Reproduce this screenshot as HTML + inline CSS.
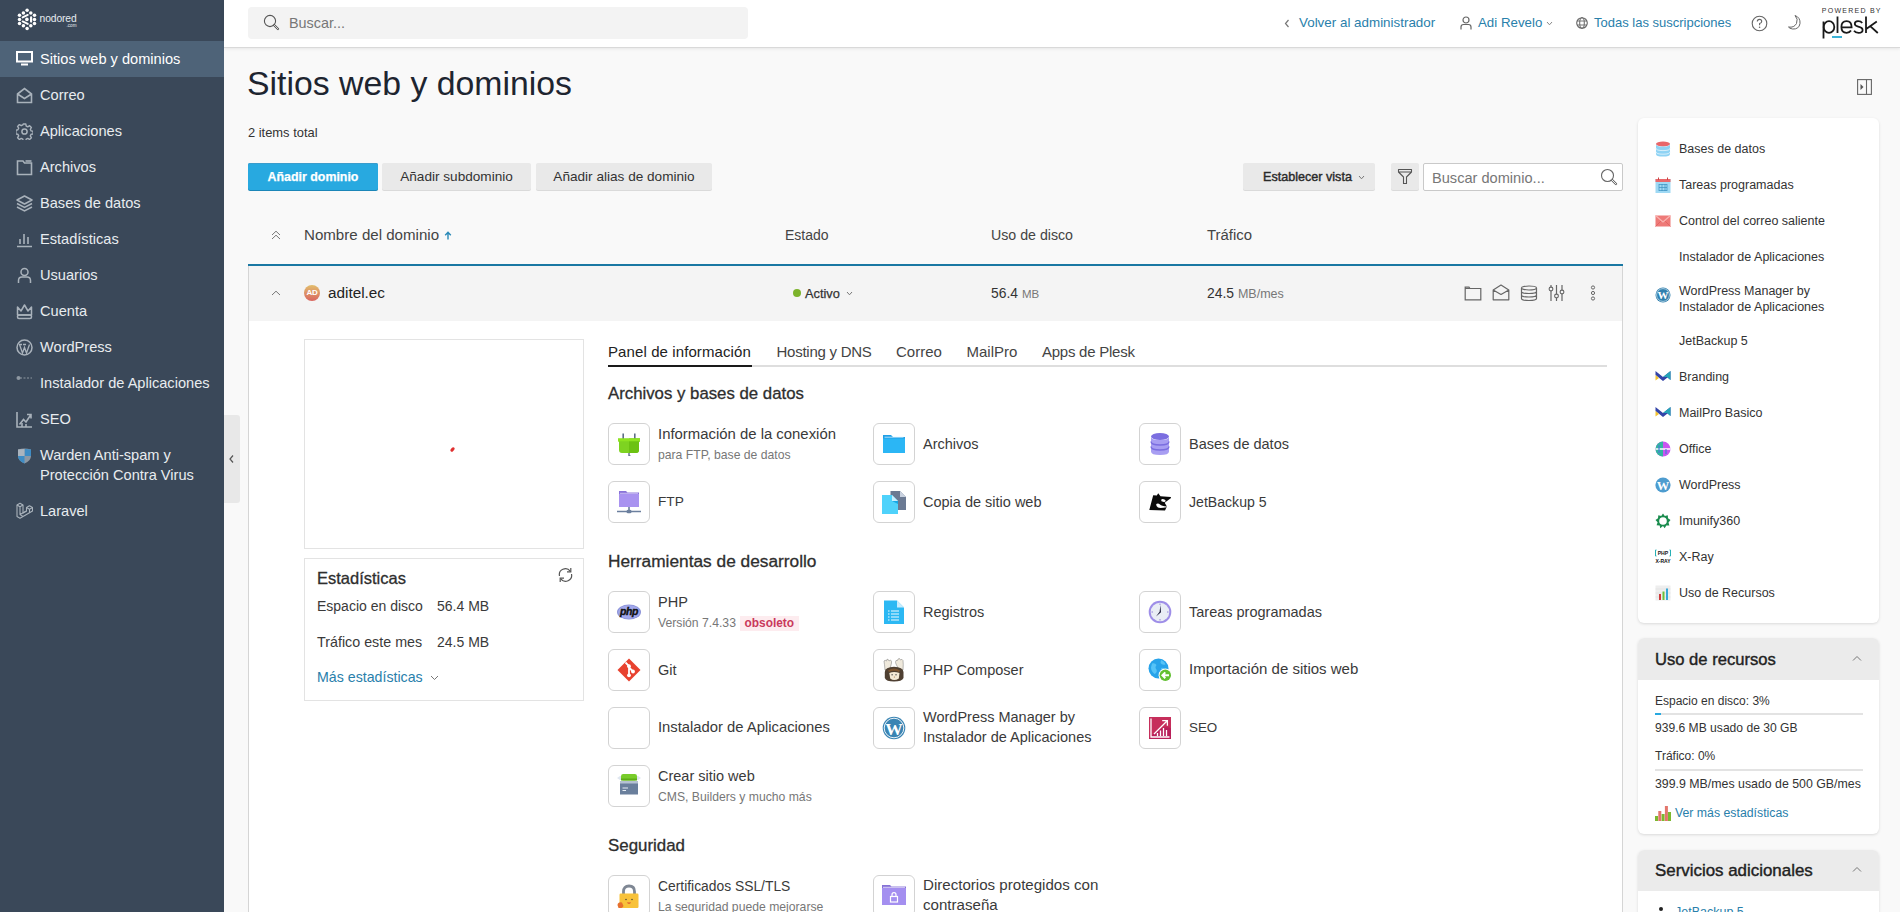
<!DOCTYPE html>
<html><head><meta charset="utf-8">
<style>
*{box-sizing:border-box;margin:0;padding:0}
html,body{width:1900px;height:912px;overflow:hidden;background:#f9f9f9;font-family:"Liberation Sans",sans-serif;color:#222}
.abs{position:absolute}
#side{position:absolute;left:0;top:0;width:224px;height:912px;background:#3a4859}
.nav{position:absolute;left:0;width:224px;height:36px;color:#e8ecef;font-size:14.6px;line-height:36px}
.nav .t{position:absolute;left:40px;top:0;white-space:nowrap}
.nav svg{position:absolute;left:16px;top:10px}
.nav.act{background:#4e6378;color:#fff}
#hdr{position:absolute;left:224px;top:0;width:1676px;height:48px;background:#fff;border-bottom:1px solid #d9d9d9;box-shadow:0 1px 3px rgba(0,0,0,.08)}
.lnk{color:#2980ab}
.btn{position:absolute;top:163px;height:27px;background:#e9e9e9;border-radius:2px;box-shadow:0 1px 0 rgba(0,0,0,.12);font-size:13.6px;line-height:27px;text-align:center;color:#333;white-space:nowrap}
.ibox{position:absolute;width:42px;height:42px;border:1px solid #d3d3d3;border-radius:6px;background:#fff}
.th{position:absolute;top:226px;font-size:15.2px;color:#444;white-space:nowrap;line-height:18px}
</style></head><body>

<div id="side">
  <!-- logo -->
  <svg class="abs" style="left:0;top:0" width="90" height="40" viewBox="0 0 90 40">
    <g fill="#fff"><circle cx="27.1" cy="10.3" r="1.75"/><circle cx="23.4" cy="12.9" r="1.75"/><circle cx="30.8" cy="12.9" r="1.75"/><circle cx="19.5" cy="15.3" r="1.75"/><circle cx="34.5" cy="15.3" r="1.75"/><circle cx="19.5" cy="19.4" r="1.75"/><circle cx="34.5" cy="19.4" r="1.75"/><circle cx="19.5" cy="23.6" r="1.75"/><circle cx="34.5" cy="23.6" r="1.75"/><circle cx="23.4" cy="25.8" r="1.75"/><circle cx="30.8" cy="25.8" r="1.75"/><circle cx="27.1" cy="28.4" r="1.75"/><circle cx="26.9" cy="19.4" r="1.8"/><rect x="30" y="16.3" width="2.2" height="6.4" rx="1.1"/></g>
    <path d="M22.6 17.4 L27.8 14.9 M22.6 21.4 L27.8 23.9" fill="none" stroke="#fff" stroke-width="1.9" stroke-linecap="round"/>
    <text x="39.5" y="22.4" fill="#e6ebf0" font-family="Liberation Sans" font-size="10.3" letter-spacing="-0.1">nodored</text>
    <text x="66.5" y="26.9" fill="#e6ebf0" font-family="Liberation Sans" font-size="4.6">.com</text>
  </svg>
  <div class="nav act" style="top:41px"><svg width="17" height="15" viewBox="0 0 17 15"><rect x="1" y="1" width="15" height="9.5" fill="none" stroke="#fff" stroke-width="2"/><rect x="5" y="12.5" width="7" height="2" fill="#fff"/></svg><span class="t">Sitios web y dominios</span></div>
  <div class="nav" style="top:77px"><svg width="17" height="17" viewBox="0 0 17 17"><path d="M1.5 7 L8.5 1.5 L15.5 7 V15.5 H1.5 Z M1.5 7 L8.5 11.5 L15.5 7" fill="none" stroke="#a9b2bb" stroke-width="1.6"/></svg><span class="t">Correo</span></div>
  <div class="nav" style="top:113px"><svg width="17" height="17" viewBox="0 0 17 17"><circle cx="8.5" cy="8.5" r="2.6" fill="none" stroke="#a9b2bb" stroke-width="1.5"/><path d="M7.2 1h2.6l.4 2 1.6.8 1.8-1.1 1.8 1.8-1.1 1.8.8 1.6 2 .4v2.6l-2 .4-.8 1.6 1.1 1.8-1.8 1.8-1.8-1.1-1.6.8-.4 2H7.2l-.4-2-1.6-.8-1.8 1.1-1.8-1.8 1.1-1.8-.8-1.6-2-.4V7.2l2-.4.8-1.6-1.1-1.8 1.8-1.8 1.8 1.1 1.6-.8z" fill="none" stroke="#a9b2bb" stroke-width="1.4" stroke-linejoin="round"/></svg><span class="t">Aplicaciones</span></div>
  <div class="nav" style="top:149px"><svg width="17" height="17" viewBox="0 0 17 17"><path d="M1.5 2 H7 L8.5 4 H15.5 V15.5 H1.5 Z" fill="none" stroke="#a9b2bb" stroke-width="1.6"/><path d="M9.5 2 H15.5" stroke="#a9b2bb" stroke-width="1.6"/></svg><span class="t">Archivos</span></div>
  <div class="nav" style="top:185px"><svg width="17" height="17" viewBox="0 0 17 17"><path d="M8.5 1 L16 5 L8.5 9 L1 5 Z" fill="none" stroke="#a9b2bb" stroke-width="1.5" stroke-linejoin="round"/><path d="M1 8.5 L8.5 12.5 L16 8.5 M1 12 L8.5 16 L16 12" fill="none" stroke="#a9b2bb" stroke-width="1.5"/></svg><span class="t">Bases de datos</span></div>
  <div class="nav" style="top:221px"><svg width="17" height="17" viewBox="0 0 17 17"><path d="M1 15.5 H16 M4 13 V8 M8 13 V3 M12 13 V6" fill="none" stroke="#a9b2bb" stroke-width="1.6"/></svg><span class="t">Estadísticas</span></div>
  <div class="nav" style="top:257px"><svg width="17" height="17" viewBox="0 0 17 17"><circle cx="8.5" cy="5" r="3.5" fill="none" stroke="#a9b2bb" stroke-width="1.5"/><path d="M2.5 16 V13.5 Q2.5 10 6 10 H11 Q14.5 10 14.5 13.5 V16" fill="none" stroke="#a9b2bb" stroke-width="1.5"/></svg><span class="t">Usuarios</span></div>
  <div class="nav" style="top:293px"><svg width="17" height="17" viewBox="0 0 17 17"><path d="M1.5 4 L5 8 L8.5 2 L12 8 L15.5 4 V12 H1.5 Z" fill="none" stroke="#a9b2bb" stroke-width="1.5" stroke-linejoin="round"/><rect x="1.5" y="12" width="14" height="3.5" rx="1.5" fill="none" stroke="#a9b2bb" stroke-width="1.5"/></svg><span class="t">Cuenta</span></div>
  <div class="nav" style="top:329px"><svg width="17" height="17" viewBox="0 0 17 17"><circle cx="8.5" cy="8.5" r="7.5" fill="none" stroke="#a9b2bb" stroke-width="1.5"/><path d="M3.5 5.5 L6.5 14 L8.5 8.5 L10.5 14 L13.5 5.5 M3 5.5 H6 M7 5.5 H10" fill="none" stroke="#a9b2bb" stroke-width="1.3"/></svg><span class="t">WordPress</span></div>
  <div class="nav" style="top:365px"><svg width="17" height="17" viewBox="0 0 17 17"><circle cx="2.5" cy="3" r="2" fill="#8e98a2"/><path d="M4 3 H16" stroke="#8e98a2" stroke-width="1" stroke-dasharray="2 1.5"/></svg><span class="t">Instalador de Aplicaciones</span></div>
  <div class="nav" style="top:401px"><svg width="17" height="17" viewBox="0 0 17 17"><path d="M1 1 V16 H16" fill="none" stroke="#a9b2bb" stroke-width="1.6"/><path d="M3.5 13.5 L7.5 8.5 L10 11 L15 3.5 M11 3.5 H15 V7.5" fill="none" stroke="#a9b2bb" stroke-width="1.6"/><path d="M6 16 V12 M10 16 V13" stroke="#a9b2bb" stroke-width="1.6"/></svg><span class="t">SEO</span></div>
  <div class="nav" style="top:437px;height:56px;line-height:20px"><svg style="top:11px;left:17px" width="15" height="16" viewBox="0 0 15 16"><path d="M1 1.5 Q7.5 -0.5 14 1.5 V8 Q14 13 7.5 15.5 Q1 13 1 8 Z" fill="#8d98a4"/><path d="M7.5 0.9 Q11 0.9 14 1.5 V8 H7.5 Z" fill="#3e8cc4"/><path d="M1 8 H7.5 V15.5 Q1 13 1 8 Z" fill="#3e8cc4"/><path d="M1 1.5 Q4 0.9 7.5 0.9 V8 H1 Z" fill="#aab4be"/></svg><span class="t" style="top:8px">Warden Anti-spam y<br>Protección Contra Virus</span></div>
  <div class="nav" style="top:493px"><svg style="top:9px;left:16px" width="17" height="18" viewBox="0 0 17 18"><g fill="none" stroke="#a9b2bb" stroke-width="1.1" stroke-linejoin="round"><path d="M1 3 L4 1.3 L7 3 V11 L10.5 9 V5.5 L13.5 3.8 L16.5 5.5 V9 L7 14.5 L4 16.2 L1 14.5 Z"/><path d="M1 3 L4 4.7 L7 3 M4 4.7 V12.6 L7 14.5 M4 12.6 L10.5 9 M10.5 5.5 L13.5 7.2 L16.5 5.5 M13.5 7.2 V10.7"/></g></svg><span class="t">Laravel</span></div>
</div>

<div id="hdr"></div>
<!-- header contents -->
<div class="abs" style="left:248px;top:7px;width:500px;height:32px;background:#f3f3f3;border-radius:4px"></div>
<svg class="abs" style="left:263px;top:14px" width="17" height="17" viewBox="0 0 17 17"><circle cx="7" cy="7" r="5.6" fill="none" stroke="#555" stroke-width="1.1"/><path d="M11 11 L15 15" stroke="#555" stroke-width="2.3" stroke-linecap="round"/><path d="M11 11 L15 15" stroke="#f3f3f3" stroke-width="0.8" stroke-linecap="round"/></svg>
<div class="abs" style="left:289px;top:14px;font-size:14.4px;line-height:18px;color:#777">Buscar...</div>

<svg class="abs" style="left:1284px;top:19px" width="6" height="9" viewBox="0 0 6 9"><path d="M4.5 1 L1.5 4.5 L4.5 8" fill="none" stroke="#777" stroke-width="1.2"/></svg>
<div class="abs lnk" style="left:1299px;top:15px;font-size:13.4px;line-height:16px;white-space:nowrap">Volver al administrador</div>
<svg class="abs" style="left:1460px;top:16px" width="12" height="14" viewBox="0 0 12 14"><circle cx="6" cy="4" r="3" fill="none" stroke="#666" stroke-width="1.2"/><path d="M1 13.5 V11 Q1 8.5 3.5 8.5 H8.5 Q11 8.5 11 11 V13.5" fill="none" stroke="#666" stroke-width="1.2"/></svg>
<div class="abs lnk" style="left:1478px;top:15px;font-size:13.3px;line-height:16px;white-space:nowrap">Adi Revelo</div>
<svg class="abs" style="left:1546px;top:21px" width="7" height="5" viewBox="0 0 7 5"><path d="M1 1 L3.5 3.8 L6 1" fill="none" stroke="#888" stroke-width="1"/></svg>
<svg class="abs" style="left:1576px;top:17px" width="12" height="12" viewBox="0 0 12 12"><circle cx="6" cy="6" r="5.3" fill="none" stroke="#666" stroke-width="1.1"/><ellipse cx="6" cy="6" rx="2.3" ry="5.3" fill="none" stroke="#666" stroke-width="1"/><path d="M1 4 H11 M1 8 H11" stroke="#666" stroke-width="0.9"/></svg>
<div class="abs lnk" style="left:1594px;top:15px;font-size:13px;line-height:16px;white-space:nowrap">Todas las suscripciones</div>
<svg class="abs" style="left:1751px;top:15px" width="17" height="17" viewBox="0 0 17 17"><circle cx="8.5" cy="8.5" r="7.3" fill="none" stroke="#666" stroke-width="1.1"/><path d="M6.3 6.6 Q6.3 4.4 8.5 4.4 Q10.7 4.4 10.7 6.4 Q10.7 7.8 8.6 8.6 V10.2" fill="none" stroke="#666" stroke-width="1.1"/><circle cx="8.6" cy="12.3" r="0.8" fill="#666"/></svg>
<svg class="abs" style="left:1786px;top:14px" width="17" height="17" viewBox="0 0 17 17"><path d="M9 1.5 Q14.5 3.5 14 9.5 Q13 15.5 6.5 15 Q3.5 14.5 2.5 13 Q8 14 10.5 9.5 Q12.5 5 9 1.5 Z" fill="none" stroke="#666" stroke-width="1"/></svg>
<svg class="abs" style="left:1818px;top:5px" width="64" height="36" viewBox="0 0 64 36">
  <text x="3.8" y="8" font-family="Liberation Sans" font-size="7" letter-spacing="1.25" fill="#333">POWERED BY</text>
  <g fill="none" stroke="#1a1a1a" stroke-width="1.8">
    <path d="M5.5 16.5 V33.5"/>
    <ellipse cx="11" cy="22" rx="5.3" ry="5.8"/>
    <path d="M19.5 11.5 V28"/>
    <path d="M23.5 22.3 H33.6 Q33.6 16.2 28.6 16.2 Q23.4 16.2 23.4 22 Q23.4 27.8 28.6 27.8 Q31.6 27.8 33 25.6"/>
    <path d="M44.2 18 Q43 16.2 40 16.2 Q36.8 16.2 36.8 18.8 Q36.8 20.8 40.2 21.6 Q44.6 22.6 44.6 24.9 Q44.6 27.8 40.6 27.8 Q37.4 27.8 36 25.8"/>
    <path d="M48 11.5 V28 M58.8 16.5 L48.2 24 M52.2 21.2 L59.8 28"/>
  </g>
  <rect x="14" y="31" width="10" height="2" fill="#3bb2d6"/>
</svg>
<!-- sidebar collapse handle -->
<div class="abs" style="left:224px;top:415px;width:16px;height:88px;background:#e8e8e8;border-radius:0 3px 3px 0"></div>
<svg class="abs" style="left:228px;top:454px" width="7" height="10" viewBox="0 0 7 10"><path d="M5 1.5 L2 5 L5 8.5" fill="none" stroke="#555" stroke-width="1.2"/></svg>

<!-- page title -->
<div class="abs" style="left:247px;top:62.5px;font-size:33.8px;line-height:40px;color:#1e2530;white-space:nowrap">Sitios web y dominios</div>
<svg class="abs" style="left:1857px;top:79px" width="15" height="16" viewBox="0 0 15 16"><rect x="0.6" y="0.6" width="13.8" height="14.8" fill="none" stroke="#666" stroke-width="1.1"/><path d="M9.5 0.6 V15.4" stroke="#666" stroke-width="1.1"/><path d="M3.5 5 L6.5 8 L3.5 11 Z" fill="#555"/></svg>
<div class="abs" style="left:248px;top:125px;font-size:12.9px;line-height:15px;color:#333;white-space:nowrap">2 items total</div>

<!-- toolbar -->
<div class="btn" style="left:248px;width:130px;padding-top:1px;background:#28a9e0;color:#fff;font-weight:bold;font-size:12.4px;-webkit-text-stroke:0.25px #fff;box-shadow:0 1px 0 #1b86b8,inset 0 1px 0 #3a9ccc">Añadir dominio</div>
<div class="btn" style="left:382px;width:149px">Añadir subdominio</div>
<div class="btn" style="left:536px;width:176px">Añadir alias de dominio</div>
<div class="btn" style="left:1243px;width:132px;text-align:left;padding-left:20px;padding-top:1px;font-size:12.6px;-webkit-text-stroke:0.4px #2a2a2a;color:#2a2a2a">Establecer vista</div>
<svg class="abs" style="left:1358px;top:175px" width="7" height="5" viewBox="0 0 7 5"><path d="M1 1 L3.5 3.8 L6 1" fill="none" stroke="#777" stroke-width="1"/></svg>
<div class="btn" style="left:1391px;width:28px"></div>
<svg class="abs" style="left:1397px;top:168px" width="16" height="17" viewBox="0 0 16 17"><path d="M1.5 1.5 H14.5 V4 L9.5 9 V15.5 H6.5 V9 L1.5 4 Z M1.5 4 H14.5" fill="none" stroke="#555" stroke-width="1.1" stroke-linejoin="round"/></svg>
<div class="abs" style="left:1423px;top:163px;width:200px;height:28px;background:#fff;border:1px solid #c9c9c9;border-radius:2px"></div>
<div class="abs" style="left:1432px;top:170px;font-size:14.6px;line-height:17px;color:#777;white-space:nowrap">Buscar dominio...</div>
<svg class="abs" style="left:1600px;top:168px" width="18" height="18" viewBox="0 0 18 18"><circle cx="7.5" cy="7.5" r="6" fill="none" stroke="#666" stroke-width="1.1"/><path d="M12 12 L16 16" stroke="#666" stroke-width="2.4" stroke-linecap="round"/><path d="M12 12 L16 16" stroke="#fff" stroke-width="0.9" stroke-linecap="round"/></svg>

<!-- table header -->
<svg class="abs" style="left:271px;top:230px" width="10" height="10" viewBox="0 0 10 10"><path d="M1 5 L5 1.2 L9 5 M1 9 L5 5.2 L9 9" fill="none" stroke="#777" stroke-width="1"/></svg>
<div class="th" style="left:304px;font-size:15.1px">Nombre del dominio</div>
<svg class="abs" style="left:444px;top:231px" width="8" height="9" viewBox="0 0 8 9"><path d="M4 8.5 V1.5 M1.2 4.2 L4 1.2 L6.8 4.2" fill="none" stroke="#2a8ab8" stroke-width="1.4"/></svg>
<div class="th" style="left:785px;font-size:14px">Estado</div>
<div class="th" style="left:991px;font-size:14.2px">Uso de disco</div>
<div class="th" style="left:1207px;font-size:14.9px">Tráfico</div>
<div class="abs" style="left:248px;top:264px;width:1375px;height:2px;background:#1a78a3"></div>

<!-- domain row -->
<div class="abs" style="left:248px;top:266px;width:1375px;height:646px;border-left:1px solid #d5d5d5;border-right:1px solid #d5d5d5;background:#fff"></div>
<div class="abs" style="left:249px;top:266px;width:1373px;height:55px;background:#f4f4f4"></div>
<svg class="abs" style="left:271px;top:290px" width="10" height="6" viewBox="0 0 10 6"><path d="M1 5 L5 1.2 L9 5" fill="none" stroke="#777" stroke-width="1"/></svg>
<div class="abs" style="left:304px;top:285px;width:16px;height:16px;border-radius:50%;background:linear-gradient(#e2be6c,#d9655f);color:#fff;font-weight:bold;font-size:8px;line-height:16px;text-align:center;letter-spacing:-0.3px">AD</div>
<div class="abs" style="left:328px;top:284px;font-size:15.3px;line-height:17px;color:#222;white-space:nowrap">aditel.ec</div>
<div class="abs" style="left:793px;top:289px;width:8px;height:8px;border-radius:50%;background:#7cb32b"></div>
<div class="abs" style="left:805px;top:286px;font-size:12.8px;line-height:15px;-webkit-text-stroke:0.25px #333;color:#333">Activo</div>
<svg class="abs" style="left:846px;top:291px" width="7" height="5" viewBox="0 0 7 5"><path d="M1 1 L3.5 3.8 L6 1" fill="none" stroke="#777" stroke-width="1"/></svg>
<div class="abs" style="left:991px;top:285px;font-size:13.9px;line-height:16px;color:#333;white-space:nowrap">56.4 <span style="font-size:11.5px;color:#777">MB</span></div>
<div class="abs" style="left:1207px;top:285px;font-size:13.9px;line-height:16px;color:#333;white-space:nowrap">24.5 <span style="font-size:12.5px;color:#777">MB/mes</span></div>
<svg class="abs" style="left:1464px;top:286px" width="18" height="15" viewBox="0 0 18 15"><path d="M1.2 13.8 V1.2 H5 L6 2.5 H16.8 V13.8 Z M1.2 2.5 H6" fill="none" stroke="#666" stroke-width="1.2"/></svg>
<svg class="abs" style="left:1492px;top:284px" width="18" height="17" viewBox="0 0 18 17"><path d="M1.2 6 L9 1 L16.8 6 V15.8 H1.2 Z M1.2 6 L9 10.5 L16.8 6" fill="none" stroke="#666" stroke-width="1.2" stroke-linejoin="round"/></svg>
<svg class="abs" style="left:1520px;top:285px" width="18" height="17" viewBox="0 0 18 17"><ellipse cx="9" cy="3" rx="7.5" ry="2" fill="none" stroke="#666" stroke-width="1.2"/><path d="M1.5 3 V13.5 Q1.5 15.5 9 15.5 Q16.5 15.5 16.5 13.5 V3 M1.5 6.5 Q1.5 8.5 9 8.5 Q16.5 8.5 16.5 6.5 M1.5 10 Q1.5 12 9 12 Q16.5 12 16.5 10" fill="none" stroke="#666" stroke-width="1.2"/></svg>
<svg class="abs" style="left:1548px;top:284px" width="17" height="18" viewBox="0 0 17 18"><path d="M3 1 V17 M8.5 1 V17 M14 1 V17" stroke="#666" stroke-width="1.2"/><circle cx="3" cy="5" r="1.9" fill="#f4f4f4" stroke="#666" stroke-width="1.1"/><circle cx="8.5" cy="12" r="1.9" fill="#f4f4f4" stroke="#666" stroke-width="1.1"/><circle cx="14" cy="8" r="1.9" fill="#f4f4f4" stroke="#666" stroke-width="1.1"/></svg>
<svg class="abs" style="left:1590px;top:285px" width="6" height="16" viewBox="0 0 6 16"><circle cx="3" cy="2.5" r="1.6" fill="none" stroke="#666" stroke-width="1"/><circle cx="3" cy="8" r="1.6" fill="none" stroke="#666" stroke-width="1"/><circle cx="3" cy="13.5" r="1.6" fill="none" stroke="#666" stroke-width="1"/></svg>

<div class="abs" style="left:304px;top:339px;width:280px;height:210px;border:1px solid #e3e3e3;background:#fff"></div>
<div class="abs" style="left:450px;top:448px;width:5px;height:3px;background:#e03030;border-radius:2px;transform:rotate(-50deg)"></div>
<div class="abs" style="left:304px;top:558px;width:280px;height:143px;border:1px solid #e3e3e3;background:#fff"></div>
<div class="abs" style="left:317px;top:568px;font-size:16.5px;line-height:20px;color:#2e2e2e;white-space:nowrap;-webkit-text-stroke:0.3px #2e2e2e">Estadísticas</div>
<svg class="abs" style="left:557px;top:567px" width="17" height="16" viewBox="0 0 17 16"><path d="M2.5 9 A6 6 0 0 1 13.2 4.2 M14.5 7 A6 6 0 0 1 3.8 11.8" fill="none" stroke="#555" stroke-width="1.2"/><path d="M13.8 1 V4.8 H10" fill="none" stroke="#555" stroke-width="1.2"/><path d="M3.2 15 V11.2 H7" fill="none" stroke="#555" stroke-width="1.2"/></svg>
<div class="abs" style="left:317px;top:598px;font-size:14px;line-height:17px;color:#3a3a3a;white-space:nowrap;">Espacio en disco</div>
<div class="abs" style="left:437px;top:598px;font-size:14px;line-height:17px;color:#3a3a3a;white-space:nowrap;">56.4 MB</div>
<div class="abs" style="left:317px;top:634px;font-size:14.3px;line-height:17px;color:#3a3a3a;white-space:nowrap;">Tráfico este mes</div>
<div class="abs" style="left:437px;top:634px;font-size:14px;line-height:17px;color:#3a3a3a;white-space:nowrap;">24.5 MB</div>
<div class="abs" style="left:317px;top:669px;font-size:14.2px;line-height:17px;color:#2980ab;white-space:nowrap;">Más estadísticas</div>
<svg class="abs" style="left:430px;top:675px" width="9" height="6" viewBox="0 0 9 6"><path d="M1 1 L4.5 4.5 L8 1" fill="none" stroke="#777" stroke-width="1"/></svg>
<div class="abs" style="left:608px;top:365px;width:999px;height:2px;background:#dedede"></div>
<div class="abs" style="left:608px;top:365px;width:144px;height:2px;background:#1a1a1a"></div>
<div class="abs" style="left:608px;top:343px;font-size:15px;line-height:18px;color:#222;white-space:nowrap;letter-spacing:0.1px">Panel de información</div>
<div class="abs" style="left:776.5px;top:343px;font-size:15px;line-height:18px;color:#444;white-space:nowrap;letter-spacing:-0.25px">Hosting y DNS</div>
<div class="abs" style="left:896px;top:343px;font-size:15px;line-height:18px;color:#444;white-space:nowrap;">Correo</div>
<div class="abs" style="left:966.5px;top:343px;font-size:15px;line-height:18px;color:#444;white-space:nowrap;">MailPro</div>
<div class="abs" style="left:1042px;top:343px;font-size:15px;line-height:18px;color:#444;white-space:nowrap;letter-spacing:-0.25px">Apps de Plesk</div>
<div class="abs" style="left:608px;top:384px;font-size:16.8px;line-height:20px;color:#2e2e2e;white-space:nowrap;-webkit-text-stroke:0.3px #2e2e2e">Archivos y bases de datos</div>
<div class="ibox" style="left:608px;top:423px"></div>
<svg class="abs" style="left:617px;top:432px" width="24" height="24" viewBox="0 0 24 24"><path d="M6.2 1.5 V7 M17.8 1.5 V7" stroke="#5f6e86" stroke-width="1.6"/><path d="M1 6.5 H23 V9.5 H22 V18 Q22 21 19 21 H5 Q2 21 2 18 V9.5 H1 Z" fill="#7ed321"/><path d="M12 6.5 H23 V9.5 H22 V18 Q22 21 19 21 H12 Z" fill="#6cc212"/><path d="M1 6.5 H23 V9.3 H1 Z" fill="#8ee41f"/><path d="M12 21 V24 H13.5" fill="none" stroke="#5f6e86" stroke-width="1.4"/></svg>
<div class="abs" style="left:658px;top:425px;font-size:14.9px;line-height:18px;color:#3a3a3a;white-space:nowrap;">Información de la conexión</div>
<div class="abs" style="left:658px;top:448px;font-size:12.2px;line-height:15px;color:#777;white-space:nowrap;">para FTP, base de datos</div>
<div class="ibox" style="left:873px;top:423px"></div>
<svg class="abs" style="left:882px;top:432px" width="24" height="24" viewBox="0 0 24 24"><path d="M1 3 H9 L11 5 H23 V21 H1 Z" fill="#1f9fe6"/><path d="M1 6.5 H23 V21 H1 Z" fill="#2bb6f5"/><path d="M2.5 5.2 H21.5" stroke="#d8f1ff" stroke-width="0.8"/></svg>
<div class="abs" style="left:923px;top:436px;font-size:14.5px;line-height:17px;color:#3a3a3a;white-space:nowrap;">Archivos</div>
<div class="ibox" style="left:1139px;top:423px"></div>
<svg class="abs" style="left:1148px;top:432px" width="24" height="24" viewBox="0 0 24 24"><ellipse cx="12" cy="4.5" rx="9" ry="3.5" fill="#7b6ee0"/><path d="M3 4.5 V19.5 Q3 23 12 23 Q21 23 21 19.5 V4.5 Q21 8 12 8 Q3 8 3 4.5 Z" fill="#a89ef2"/><path d="M3 9.5 Q3 13 12 13 Q21 13 21 9.5 M3 14.5 Q3 18 12 18 Q21 18 21 14.5" fill="none" stroke="#7b6ee0" stroke-width="1.4"/></svg>
<div class="abs" style="left:1189px;top:436px;font-size:14.5px;line-height:17px;color:#3a3a3a;white-space:nowrap;">Bases de datos</div>
<div class="ibox" style="left:608px;top:481px"></div>
<svg class="abs" style="left:617px;top:490px" width="24" height="24" viewBox="0 0 24 24"><path d="M2 1 H9 L10.5 2.5 H22 V17 H2 Z" fill="#8a73d8"/><path d="M2 4 H22 V17 H2 Z" fill="#a993f0"/><path d="M3 3.3 H21" stroke="#e6ddff" stroke-width="0.7"/><path d="M12 17 V21.5 M0 21.5 H24" stroke="#6b7f9e" stroke-width="1.6"/><rect x="9.5" y="19.8" width="5" height="3.4" rx="1.5" fill="#6b7f9e"/></svg>
<div class="abs" style="left:658px;top:494px;font-size:13.7px;line-height:16px;color:#3a3a3a;white-space:nowrap;">FTP</div>
<div class="ibox" style="left:873px;top:481px"></div>
<svg class="abs" style="left:882px;top:490px" width="24" height="24" viewBox="0 0 24 24"><path d="M8.5 1 H18 L24 7 V20 H8.5 Z" fill="#6b7a93"/><path d="M18 1 L24 7 H18 Z" fill="#c9d2e0"/><path d="M0 5 H10 L16 11 V25 H0 Z" fill="#4fd2fb"/><path d="M10 5 L16 11 H10 Z" fill="#c8efff"/><path d="M10 11 H16 V14 Z" fill="#17a8e6"/></svg>
<div class="abs" style="left:923px;top:494px;font-size:14.5px;line-height:17px;color:#3a3a3a;white-space:nowrap;">Copia de sitio web</div>
<div class="ibox" style="left:1139px;top:481px"></div>
<svg class="abs" style="left:1148px;top:490px" width="24" height="24" viewBox="0 0 24 24"><path d="M1.3 20 L5.2 5.2 L8.8 5.6 L10.2 3.2 L12.5 6.3 L22.7 6.9 Q23.6 8 22 8.8 L16.7 12.8 L18.9 16.6 L17 20.4 Z" fill="#0a0a0a"/><ellipse cx="15.4" cy="10.5" rx="2.3" ry="1.4" transform="rotate(15 15.4 10.5)" fill="#fff"/><path d="M8.2 14.1 Q10 12.6 12 14.4 Q13.5 16 18.9 16.4 L18.6 17.3 Q12 18.6 10 17.6 Q8 16.6 8.2 14.1 Z" fill="#fff"/></svg>
<div class="abs" style="left:1189px;top:494px;font-size:14.1px;line-height:17px;color:#3a3a3a;white-space:nowrap;">JetBackup 5</div>
<div class="abs" style="left:608px;top:551px;font-size:17.3px;line-height:21px;color:#2e2e2e;white-space:nowrap;-webkit-text-stroke:0.3px #2e2e2e">Herramientas de desarrollo</div>
<div class="ibox" style="left:608px;top:591px"></div>
<svg class="abs" style="left:617px;top:600px" width="24" height="24" viewBox="0 0 24 24"><ellipse cx="12" cy="12" rx="12" ry="7.6" fill="#8c93d8"/><ellipse cx="12" cy="12" rx="11" ry="6.7" fill="#a2a8ec"/><text x="12" y="15.2" text-anchor="middle" font-family="Liberation Sans" font-weight="bold" font-style="italic" font-size="10.5" letter-spacing="-0.4" stroke="#111" stroke-width="0.35" fill="#111">php</text></svg>
<div class="abs" style="left:658px;top:594px;font-size:14.5px;line-height:17px;color:#3a3a3a;white-space:nowrap;">PHP</div>
<div class="abs" style="left:658px;top:616px;font-size:12.2px;line-height:15px;color:#777;white-space:nowrap;">Versión 7.4.33</div>
<div class="abs" style="left:740px;top:616px;width:59px;height:15px;background:#fdecef"></div>
<div class="abs" style="left:744.5px;top:616px;font-size:11.9px;line-height:14px;color:#c93a5c;white-space:nowrap;font-weight:bold">obsoleto</div>
<div class="ibox" style="left:873px;top:591px"></div>
<svg class="abs" style="left:882px;top:600px" width="24" height="24" viewBox="0 0 24 24"><path d="M2 0.5 H15 L22 7.5 V24 H2 Z" fill="#2cb8f3"/><path d="M15 0.5 L22 7.5 H15 Z" fill="#c9ecfd"/><path d="M9 11 H17 M9 14 H17 M9 17 H17 M9 20 H17" stroke="#f0faff" stroke-width="1.1"/><path d="M6 11 H7.5 M6 14 H7.5 M6 17 H7.5 M6 20 H7.5" stroke="#f0faff" stroke-width="1.1"/></svg>
<div class="abs" style="left:923px;top:604px;font-size:14.5px;line-height:17px;color:#3a3a3a;white-space:nowrap;">Registros</div>
<div class="ibox" style="left:1139px;top:591px"></div>
<svg class="abs" style="left:1148px;top:600px" width="24" height="24" viewBox="0 0 24 24"><circle cx="12" cy="12" r="11.3" fill="#9e8ee8"/><circle cx="12" cy="12" r="9.3" fill="#e9edf5"/><path d="M12 3.5 V5 M12 19 V20.5 M3.5 12 H5 M19 12 H20.5" stroke="#8a7ad8" stroke-width="0.9"/><path d="M12.4 5 L13 12.2 L8 16.5 L11.6 11.8 Z" fill="#1c1c3a"/></svg>
<div class="abs" style="left:1189px;top:604px;font-size:14.5px;line-height:17px;color:#3a3a3a;white-space:nowrap;">Tareas programadas</div>
<div class="ibox" style="left:608px;top:649px"></div>
<svg class="abs" style="left:617px;top:658px" width="24" height="24" viewBox="0 0 24 24"><path d="M12 0.5 L23.5 12 L12 23.5 L0.5 12 Z" fill="#e8422f"/><path d="M8.5 4.5 L12 8 V17.5 M12 9.5 L16 13.5" fill="none" stroke="#fff" stroke-width="1.8"/><circle cx="12" cy="8.2" r="1.9" fill="#fff"/><circle cx="12" cy="17.3" r="1.9" fill="#fff"/><circle cx="16" cy="13.5" r="1.9" fill="#fff"/></svg>
<div class="abs" style="left:658px;top:662px;font-size:14.5px;line-height:17px;color:#3a3a3a;white-space:nowrap;">Git</div>
<div class="ibox" style="left:873px;top:649px"></div>
<svg class="abs" style="left:882px;top:658px" width="24" height="24" viewBox="0 0 24 24"><path d="M3 12 Q2.5 6 2 3 Q3 1.5 4.5 3 L5 1.2 Q6.5 1 7 3 L8.5 2 Q10 3 9.5 5 L8.5 9 Q8 11 7 12 Z" fill="#efe9dc" stroke="#777" stroke-width="0.5"/><path d="M21 12 Q21.5 6 21 2.5 Q20 0.5 18.5 2 L17.5 0.5 Q15.5 0.5 15.5 2.5 L14 2.5 Q13 4 14 6 L15.5 9 Q16 11 17 12 Z" fill="#efe9dc" stroke="#777" stroke-width="0.5"/><path d="M2.8 14 Q3 9 12 8.8 Q21 9 21.5 14 V20 Q20 23.5 12 23.5 Q4 23.5 2.8 20 Z" fill="#4f4032"/><path d="M6 12.5 Q12 8.5 18 12.5 L17 14 Q12 11.5 7 14 Z" fill="#7d5531"/><path d="M7.3 15 Q12 12.8 17.5 15 L16.8 20.5 Q12 23.5 8.2 20.5 Z" fill="#f3e9d6"/><path d="M9.3 16.8 H11 M13.2 16.8 H14.9" stroke="#333" stroke-width="0.8"/><circle cx="12.3" cy="19" r="0.5" fill="#a0662a"/></svg>
<div class="abs" style="left:923px;top:662px;font-size:14.5px;line-height:17px;color:#3a3a3a;white-space:nowrap;">PHP Composer</div>
<div class="ibox" style="left:1139px;top:649px"></div>
<svg class="abs" style="left:1148px;top:658px" width="24" height="24" viewBox="0 0 24 24"><circle cx="10.5" cy="10.5" r="10" fill="#27a3ea"/><path d="M4 5.5 Q7 4.5 8.5 7 Q6.5 9.5 8.5 11.5 Q9.5 14.5 6.5 16 Q3 13 3 9.5 Z M13 2 Q16.5 3 17.5 6.5 Q14 7.5 12.5 5 Z M13 10 Q16 9 17 12 L15 14 Q13 13 13 10 Z" fill="#55c3f7"/><circle cx="17.3" cy="17.3" r="6.7" fill="#fff"/><circle cx="17.3" cy="17.3" r="5.7" fill="#62c032"/><path d="M21 17.3 H14.5 M17.3 14.4 L14.4 17.3 L17.3 20.2" fill="none" stroke="#fff" stroke-width="2"/></svg>
<div class="abs" style="left:1189px;top:660px;font-size:15px;line-height:18px;color:#3a3a3a;white-space:nowrap;">Importación de sitios web</div>
<div class="ibox" style="left:608px;top:707px"></div>
<div class="abs" style="left:658px;top:718px;font-size:14.8px;line-height:18px;color:#3a3a3a;white-space:nowrap;">Instalador de Aplicaciones</div>
<div class="ibox" style="left:873px;top:707px"></div>
<svg class="abs" style="left:882px;top:716px" width="24" height="24" viewBox="0 0 24 24"><circle cx="12" cy="12" r="11.3" fill="#3a84b3"/><circle cx="12" cy="12" r="9.8" fill="none" stroke="#fff" stroke-width="0.9"/><text x="12" y="18.6" text-anchor="middle" font-family="Liberation Serif" font-weight="bold" font-size="17.5" fill="#fff">W</text></svg>
<div class="abs" style="left:923px;top:709px;font-size:14.5px;line-height:17px;color:#3a3a3a;white-space:nowrap;">WordPress Manager by</div>
<div class="abs" style="left:923px;top:729px;font-size:14.5px;line-height:17px;color:#3a3a3a;white-space:nowrap;">Instalador de Aplicaciones</div>
<div class="ibox" style="left:1139px;top:707px"></div>
<svg class="abs" style="left:1148px;top:716px" width="24" height="24" viewBox="0 0 24 24"><rect x="1" y="1" width="22" height="22" fill="#b9205a"/><path d="M1 1 H23 V12 Q12 8 1 23 Z" fill="#d23a5c" opacity=".55"/><path d="M3 2.5 V21 H21.5" fill="none" stroke="#fff" stroke-width="1.3"/><path d="M6 18 L19 5 M14.2 4.6 H19.4 V9.8" fill="none" stroke="#fff" stroke-width="1.3"/><path d="M9.5 20 V17 M12.5 20 V14.5 M15.5 20 V12 M18.5 20 V14" stroke="#fff" stroke-width="1.3"/></svg>
<div class="abs" style="left:1189px;top:720px;font-size:13.4px;line-height:16px;color:#3a3a3a;white-space:nowrap;">SEO</div>
<div class="ibox" style="left:608px;top:765px"></div>
<svg class="abs" style="left:617px;top:774px" width="24" height="24" viewBox="0 0 24 24"><path d="M0 4 L3 2 H21 L24 4 L21 6 H3 Z" fill="#dfe6f0"/><rect x="4" y="0" width="16" height="6.5" rx="2.2" fill="#78cc2a"/><rect x="4" y="4.5" width="16" height="2" fill="#5eae16"/><rect x="3" y="7.5" width="18" height="13" fill="#6a7f9c"/><rect x="3" y="7.5" width="18" height="2" fill="#b5c2d3"/><path d="M5.5 14 H11 M5.5 16.5 H9" stroke="#e6edf5" stroke-width="1"/></svg>
<div class="abs" style="left:658px;top:768px;font-size:14.5px;line-height:17px;color:#3a3a3a;white-space:nowrap;">Crear sitio web</div>
<div class="abs" style="left:658px;top:790px;font-size:12.2px;line-height:15px;color:#777;white-space:nowrap;">CMS, Builders y mucho más</div>
<div class="abs" style="left:608px;top:836px;font-size:16.9px;line-height:20px;color:#2e2e2e;white-space:nowrap;-webkit-text-stroke:0.3px #2e2e2e">Seguridad</div>
<div class="ibox" style="left:608px;top:875px"></div>
<svg class="abs" style="left:617px;top:884px" width="24" height="24" viewBox="0 0 24 24"><path d="M6.5 11 V7.5 Q6.5 2 12 2 Q17.5 2 17.5 7.5 V11" fill="none" stroke="#7f8794" stroke-width="2.8"/><rect x="2.5" y="9.5" width="19" height="14.5" rx="1.2" fill="#f8c23a"/><circle cx="9" cy="15.5" r="0.7" fill="#333"/><circle cx="15" cy="15.5" r="0.7" fill="#333"/><path d="M9.8 18.5 Q12 21 14.2 18.5 Z" fill="#d84a2c"/><path d="M0.5 21 Q1 17.5 5 18.5 L6.5 22 Q5 25 1.5 24 Z" fill="#e6702e"/></svg>
<div class="abs" style="left:658px;top:878px;font-size:13.85px;line-height:17px;color:#3a3a3a;white-space:nowrap;">Certificados SSL/TLS</div>
<div class="abs" style="left:658px;top:900px;font-size:12.2px;line-height:15px;color:#777;white-space:nowrap;">La seguridad puede mejorarse</div>
<div class="ibox" style="left:873px;top:875px"></div>
<svg class="abs" style="left:882px;top:884px" width="24" height="24" viewBox="0 0 24 24"><path d="M0 1 H8 L9.5 2.5 H24 V21 H0 Z" fill="#8672d6"/><path d="M0 4 H24 V21 H0 Z" fill="#a48ff0"/><path d="M1 3.3 H23" stroke="#f2eeff" stroke-width="0.8"/><rect x="8.5" y="12.5" width="7" height="5.5" fill="none" stroke="#fff" stroke-width="1.2"/><path d="M10 12.5 V10.7 Q10 8.7 12 8.7 Q14 8.7 14 10.7 V12.5" fill="none" stroke="#fff" stroke-width="1.2"/></svg>
<div class="abs" style="left:923px;top:876px;font-size:15.1px;line-height:18px;color:#3a3a3a;white-space:nowrap;">Directorios protegidos con</div>
<div class="abs" style="left:923px;top:896px;font-size:15.1px;line-height:18px;color:#3a3a3a;white-space:nowrap;">contraseña</div>
<div class="abs" style="left:1638px;top:118px;width:241px;height:505px;background:#fff;border-radius:6px;box-shadow:0 1px 3px rgba(0,0,0,.13)"></div>
<div class="abs" style="left:1679px;top:142px;font-size:12.5px;line-height:15px;color:#333;white-space:nowrap;">Bases de datos</div>
<svg class="abs" style="left:1655px;top:141px" width="16" height="16" viewBox="0 0 16 16"><ellipse cx="8" cy="3" rx="7" ry="2.6" fill="#e8676a"/><path d="M1 3 V13 Q1 15.6 8 15.6 Q15 15.6 15 13 V3 Q15 5.6 8 5.6 Q1 5.6 1 3 Z" fill="#8fd3f4"/><path d="M1 7.2 Q1 9.6 8 9.6 Q15 9.6 15 7.2 M1 10.8 Q1 13.2 8 13.2 Q15 13.2 15 10.8" fill="none" stroke="#e8f6fd" stroke-width="0.8"/></svg>
<div class="abs" style="left:1679px;top:178px;font-size:12.5px;line-height:15px;color:#333;white-space:nowrap;">Tareas programadas</div>
<svg class="abs" style="left:1655px;top:177px" width="16" height="16" viewBox="0 0 16 16"><rect x="0.5" y="2" width="15" height="14" fill="#9fd9f4"/><rect x="0.5" y="2" width="15" height="3" fill="#e8676a"/><path d="M3.5 0.5 V3 M12.5 0.5 V3" stroke="#c44" stroke-width="1"/><path d="M4 7 V14 M7 7 V14 M10 7 V14 M4 7.5 H12 M4 10.5 H12 M4 13.5 H12 M12 7 V14" stroke="#3a8fc0" stroke-width="0.7"/></svg>
<div class="abs" style="left:1679px;top:214px;font-size:12.5px;line-height:15px;color:#333;white-space:nowrap;">Control del correo saliente</div>
<svg class="abs" style="left:1655px;top:213px" width="16" height="16" viewBox="0 0 16 16"><rect x="0.5" y="2.5" width="15" height="11" fill="#ee7a78"/><path d="M0.5 2.5 L8 9 L15.5 2.5" fill="none" stroke="#f9b3b0" stroke-width="1.2"/><path d="M0.5 13.5 L6 8 M15.5 13.5 L10 8" stroke="#e0605e" stroke-width="0.8"/></svg>
<div class="abs" style="left:1679px;top:250px;font-size:12.5px;line-height:15px;color:#333;white-space:nowrap;">Instalador de Aplicaciones</div>
<div class="abs" style="left:1679px;top:284px;font-size:12.5px;line-height:15px;color:#333;white-space:nowrap;">WordPress Manager by</div>
<div class="abs" style="left:1679px;top:300px;font-size:12.5px;line-height:15px;color:#333;white-space:nowrap;">Instalador de Aplicaciones</div>
<svg class="abs" style="left:1655px;top:287px" width="16" height="16" viewBox="0 0 16 16"><circle cx="8" cy="8" r="7.5" fill="#2f7fae"/><circle cx="8" cy="8" r="6.4" fill="none" stroke="#fff" stroke-width="0.6"/><text x="8" y="12" text-anchor="middle" font-family="Liberation Serif" font-weight="bold" font-size="11" fill="#fff">W</text></svg>
<div class="abs" style="left:1679px;top:334px;font-size:12.5px;line-height:15px;color:#333;white-space:nowrap;">JetBackup 5</div>
<div class="abs" style="left:1679px;top:370px;font-size:12.5px;line-height:15px;color:#333;white-space:nowrap;">Branding</div>
<svg class="abs" style="left:1655px;top:369px" width="16" height="16" viewBox="0 0 16 16"><path d="M0.5 2 L8 8 L15.5 2 V11 L12.5 8.5 L8 12 L0.5 6 Z" fill="#3344a8"/><path d="M8 8 L15.5 2 V11 L12 8 Z" fill="#26a4b8"/><path d="M0.5 6 L4 9 L0.5 11.5 Z" fill="#f2c230"/></svg>
<div class="abs" style="left:1679px;top:406px;font-size:12.5px;line-height:15px;color:#333;white-space:nowrap;">MailPro Basico</div>
<svg class="abs" style="left:1655px;top:405px" width="16" height="16" viewBox="0 0 16 16"><path d="M0.5 2 L8 8 L15.5 2 V11 L12.5 8.5 L8 12 L0.5 6 Z" fill="#3344a8"/><path d="M8 8 L15.5 2 V11 L12 8 Z" fill="#26a4b8"/><path d="M0.5 6 L4 9 L0.5 11.5 Z" fill="#f2c230"/></svg>
<div class="abs" style="left:1679px;top:442px;font-size:12.5px;line-height:15px;color:#333;white-space:nowrap;">Office</div>
<svg class="abs" style="left:1655px;top:441px" width="16" height="16" viewBox="0 0 16 16"><circle cx="8" cy="8" r="7.5" fill="#c855f0"/><path d="M8 0.5 A7.5 7.5 0 0 0 8 15.5 Z" fill="#33b6a0"/><path d="M0.5 8 H15.5" stroke="#fff" stroke-width="1.5"/><path d="M4 4 V12 M11 8 V13" stroke="#4a7bd8" stroke-width="1.2"/></svg>
<div class="abs" style="left:1679px;top:478px;font-size:12.5px;line-height:15px;color:#333;white-space:nowrap;">WordPress</div>
<svg class="abs" style="left:1655px;top:477px" width="16" height="16" viewBox="0 0 16 16"><circle cx="8" cy="8" r="7.6" fill="#4e9ccf"/><text x="8" y="12.6" text-anchor="middle" font-family="Liberation Serif" font-weight="bold" font-size="12.5" fill="#fff">W</text></svg>
<div class="abs" style="left:1679px;top:514px;font-size:12.5px;line-height:15px;color:#333;white-space:nowrap;">Imunify360</div>
<svg class="abs" style="left:1655px;top:513px" width="16" height="16" viewBox="0 0 16 16"><path d="M8 0.5 L9.8 3 L12.8 2.2 L13 5.2 L15.5 7 L13.5 9.4 L14.4 12.4 L11.3 12.6 L9.7 15.3 L8 13 L5.2 15.3 L4.7 12.5 L1.6 12.3 L2.6 9.3 L0.5 7 L3 5.2 L3.3 2.2 L6.2 3 Z" fill="#1a8c4e"/><circle cx="8" cy="8" r="3.8" fill="#fff"/></svg>
<div class="abs" style="left:1679px;top:550px;font-size:12.5px;line-height:15px;color:#333;white-space:nowrap;">X-Ray</div>
<svg class="abs" style="left:1655px;top:549px" width="16" height="16" viewBox="0 0 16 16"><path d="M1.5 1 H0.5 V7 H1.5 M14.5 1 H15.5 V7 H14.5" fill="none" stroke="#27b0b5" stroke-width="1"/><text x="8" y="6.3" text-anchor="middle" font-family="Liberation Sans" font-weight="bold" font-size="5.2" fill="#222">PHP</text><text x="8" y="14" text-anchor="middle" font-family="Liberation Sans" font-weight="bold" font-size="5" fill="#111">X-RAY</text></svg>
<div class="abs" style="left:1679px;top:586px;font-size:12.5px;line-height:15px;color:#333;white-space:nowrap;">Uso de Recursos</div>
<svg class="abs" style="left:1655px;top:585px" width="16" height="16" viewBox="0 0 16 16"><rect x="0.5" y="0.5" width="15" height="15" fill="#eee"/><path d="M0.5 4 H15.5 M0.5 8 H15.5 M0.5 12 H15.5" stroke="#ddd" stroke-width="0.6"/><rect x="4" y="9" width="2" height="6" fill="#d03b3b"/><rect x="7.5" y="6.5" width="2" height="8.5" fill="#6bbf3a"/><rect x="11" y="3.5" width="2" height="11.5" fill="#36a8d8"/></svg>
<div class="abs" style="left:1638px;top:638px;width:241px;height:196px;background:#fff;border-radius:6px;box-shadow:0 1px 3px rgba(0,0,0,.13);overflow:hidden"><div style="height:42px;background:#ebebeb"></div></div>
<div class="abs" style="left:1655px;top:650px;font-size:16.6px;line-height:20px;color:#222;white-space:nowrap;-webkit-text-stroke:0.4px #222">Uso de recursos</div>
<svg class="abs" style="left:1852px;top:655px" width="10" height="7" viewBox="0 0 10 7"><path d="M1 5.5 L5 1.5 L9 5.5" fill="none" stroke="#777" stroke-width="1"/></svg>
<div class="abs" style="left:1655px;top:694px;font-size:12px;line-height:14px;color:#333;white-space:nowrap;">Espacio en disco: 3%</div>
<div class="abs" style="left:1655px;top:713px;width:208px;height:2px;background:#e3e3e3"></div>
<div class="abs" style="left:1655px;top:713px;width:6px;height:2px;background:#28a9e0"></div>
<div class="abs" style="left:1655px;top:721px;font-size:12.1px;line-height:15px;color:#333;white-space:nowrap;">939.6 MB usado de 30 GB</div>
<div class="abs" style="left:1655px;top:749px;font-size:12px;line-height:14px;color:#333;white-space:nowrap;">Tráfico: 0%</div>
<div class="abs" style="left:1655px;top:769px;width:208px;height:2px;background:#e3e3e3"></div>
<div class="abs" style="left:1655px;top:777px;font-size:12.35px;line-height:15px;color:#333;white-space:nowrap;">399.9 MB/mes usado de 500 GB/mes</div>
<svg class="abs" style="left:1655px;top:805px" width="16" height="16" viewBox="0 0 16 16"><rect x="0" y="11" width="3" height="5" fill="#7cb82f"/><rect x="3.3" y="6" width="3" height="10" fill="#e3766c"/><rect x="6.6" y="9" width="3" height="7" fill="#7cb82f"/><rect x="9.9" y="1" width="3" height="15" fill="#e3766c"/><rect x="13" y="7" width="3" height="9" fill="#7cb82f"/></svg>
<div class="abs" style="left:1675px;top:806px;font-size:12.3px;line-height:15px;color:#2980ab;white-space:nowrap;">Ver más estadísticas</div>
<div class="abs" style="left:1638px;top:850px;width:241px;height:80px;background:#fff;border-radius:6px;box-shadow:0 1px 3px rgba(0,0,0,.13);overflow:hidden"><div style="height:41px;background:#ebebeb"></div></div>
<div class="abs" style="left:1655px;top:861px;font-size:16.9px;line-height:20px;color:#222;white-space:nowrap;-webkit-text-stroke:0.4px #222">Servicios adicionales</div>
<svg class="abs" style="left:1852px;top:866px" width="10" height="7" viewBox="0 0 10 7"><path d="M1 5.5 L5 1.5 L9 5.5" fill="none" stroke="#777" stroke-width="1"/></svg>
<div class="abs" style="left:1659px;top:907px;width:4px;height:4px;border-radius:50%;background:#222"></div>
<div class="abs" style="left:1675px;top:905px;font-size:12.5px;line-height:15px;color:#2980ab;white-space:nowrap;">JetBackup 5</div>
</body></html>
